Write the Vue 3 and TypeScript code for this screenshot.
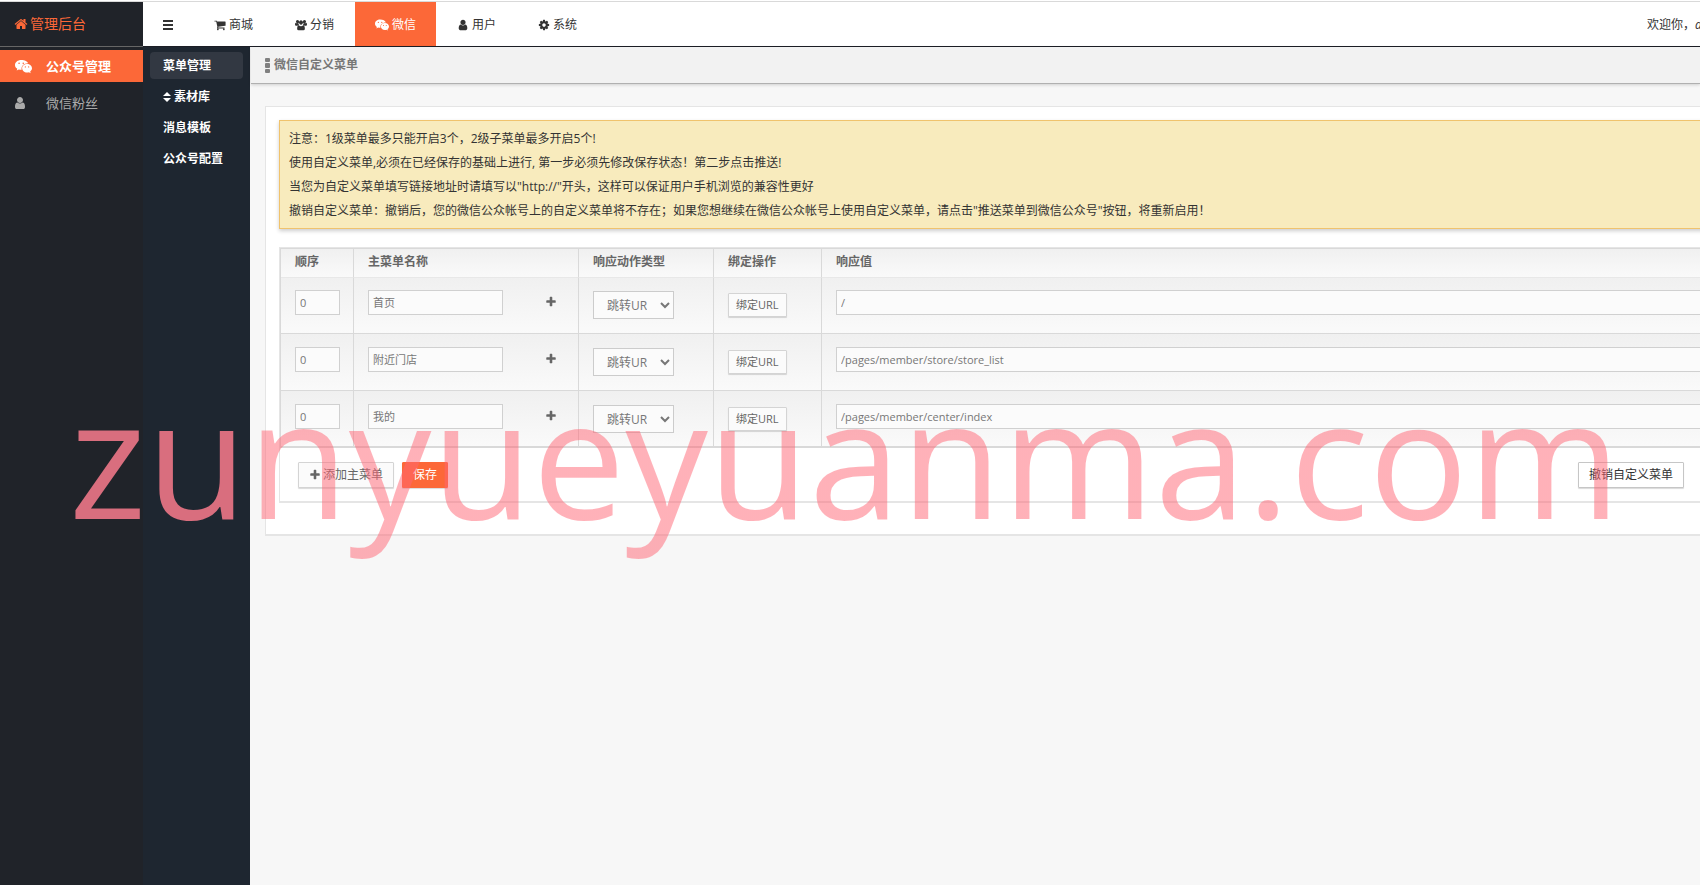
<script setup lang="ts">
import { ref } from 'vue'

interface NavItem {
  label: string
  icon: string
  active?: boolean
}

interface MenuRow {
  order: number
  name: string
  url: string
}

const box = '0 0 1792 1792'

const icons: Record<string, string> = {
  home: 'M1472 992v480q0 26-19 45t-45 19h-384v-384h-256v384h-384q-26 0-45-19t-19-45v-480q0-1 .5-3t.5-3l575-474 575 474q1 2 1 6zm223-69l-62 74q-8 9-21 11h-3q-13 0-21-7l-692-577-692 577q-12 8-24 7-13-2-21-11l-62-74q-8-10-7-23.5t11-21.5l719-599q32-26 76-26t76 26l244 204v-195q0-14 9-23t23-9h192q14 0 23 9t9 23v408l219 182q10 8 11 21.5t-7 23.5z',
  cart: 'M704 1536q0 52-38 90t-90 38-90-38-38-90 38-90 90-38 90 38 38 90zm896 0q0 52-38 90t-90 38-90-38-38-90 38-90 90-38 90 38 38 90zm128-1088v512q0 24-16.5 42.5t-40.5 21.5l-1044 122q13 60 13 70 0 16-24 64h920q26 0 45 19t19 45-19 45-45 19h-1024q-26 0-45-19t-19-45q0-11 8-31.5t16-36 21.5-40 15.5-29.5l-177-823h-204q-26 0-45-19t-19-45 19-45 45-19h256q16 0 28.5 6.5t19.5 15.5 13 24.5 8 26 5.5 29.5 4.5 26h1201q26 0 45 19t19 45z',
  users: 'M660 700a300 300 0 1 1 472 0a300 300 0 0 1-472 0zM140 380a240 240 0 1 1 480 0a240 240 0 0 1-480 0zM1172 380a240 240 0 1 1 480 0a240 240 0 0 1-480 0zM0 860q0-280 120-300q110 80 240 80q90 0 150-30q0 170 90 270q-150 10-240 110h-200q-160 0-160-130zM1792 860q0-280-120-300q-110 80-240 80q-90 0-150-30q0 170-90 270q150 10 240 110h200q160 0 160-130zM320 1440q0-480 250-500q150 130 326 130t326-130q250 20 250 500q0 224-220 224h-712q-220 0-220-224z',
  wechat: 'M660 200C290 200 0 430 0 730c0 170 90 310 240 410l-60 190 225-115c85 20 165 32 255 32h45c-100-390 270-700 680-680C1330 350 1020 200 660 200zM430 470a85 85 0 1 1 0 170a85 85 0 0 1 0-170zM870 470a85 85 0 1 1 0 170a85 85 0 0 1 0-170zM1270 640c-300 0-520 205-520 445s220 445 520 445c70 0 140-15 200-35l180 100-50-165c110-85 192-200 192-345c0-240-222-445-522-445zM1090 880a65 65 0 1 1 0 130a65 65 0 0 1 0-130zM1440 880a65 65 0 1 1 0 130a65 65 0 0 1 0-130z',
  user: 'M1536 1399q0 109-62.5 187t-150.5 78h-854q-88 0-150.5-78t-62.5-187q0-85 8.5-160.5t31.5-152 58.5-131 94-89 134.5-34.5q131 128 313 128t313-128q76 0 134.5 34.5t94 89 58.5 131 31.5 152 8.5 160.5zm-256-887q0 159-112.5 271.5t-271.5 112.5-271.5-112.5-112.5-271.5 112.5-271.5 271.5-112.5 271.5 112.5 112.5 271.5z',
  cog: 'M1152 896q0-106-75-181t-181-75-181 75-75 181 75 181 181 75 181-75 75-181zm512-109v222q0 12-8 23t-20 13l-185 28q-19 54-39 91 35 50 107 138 10 12 10 25t-9 23q-27 37-99 108t-94 71q-12 0-26-9l-138-108q-44 23-91 38-16 136-29 186-7 28-36 28h-222q-14 0-24.5-8.5t-11.5-21.5l-28-184q-49-16-90-37l-141 107q-10 9-25 9-14 0-25-11-126-114-165-168-7-10-7-23 0-12 8-23 15-21 51-66.5t54-70.5q-27-50-41-99l-183-27q-13-2-21-12.5t-8-23.5v-222q0-12 8-23t19-13l186-28q14-46 39-92-40-57-107-138-10-12-10-24 0-10 9-23 26-36 98.5-107.5t94.5-71.5q13 0 26 10l138 107q44-23 91-38 16-136 29-186 7-28 36-28h222q14 0 24.5 8.5t11.5 21.5l28 184q49 16 90 37l142-107q9-9 24-9 13 0 25 10 129 119 165 170 7 8 7 22 0 12-8 23-15 21-51 66.5t-54 70.5q26 50 41 98l183 28q13 2 21 12.5t8 23.5z',
  plus: 'M1600 736v192q0 40-28 68t-68 28h-416v416q0 40-28 68t-68 28h-192q-40 0-68-28t-28-68v-416h-416q-40 0-68-28t-28-68v-192q0-40 28-68t68-28h416v-416q0-40 28-68t68-28h192q40 0 68 28t28 68v416h416q40 0 68 28t28 68z',
}

const nav: NavItem[] = [
  { label: '商城', icon: 'cart' },
  { label: '分销', icon: 'users' },
  { label: '微信', icon: 'wechat', active: true },
  { label: '用户', icon: 'user' },
  { label: '系统', icon: 'cog' },
]

const sideItems: NavItem[] = [
  { label: '公众号管理', icon: 'wechat', active: true },
  { label: '微信粉丝', icon: 'user' },
]

const subItems = [
  { label: '菜单管理', active: true },
  { label: '素材库', sortable: true },
  { label: '消息模板' },
  { label: '公众号配置' },
]

const notices = [
  '注意：1级菜单最多只能开启3个，2级子菜单最多开启5个!',
  '使用自定义菜单,必须在已经保存的基础上进行, 第一步必须先修改保存状态！第二步点击推送!',
  '当您为自定义菜单填写链接地址时请填写以"http://"开头，这样可以保证用户手机浏览的兼容性更好',
  '撤销自定义菜单：撤销后，您的微信公众帐号上的自定义菜单将不存在；如果您想继续在微信公众帐号上使用自定义菜单，请点击"推送菜单到微信公众号"按钮，将重新启用！',
]

const rows = ref<MenuRow[]>([
  { order: 0, name: '首页', url: '/' },
  { order: 0, name: '附近门店', url: '/pages/member/store/store_list' },
  { order: 0, name: '我的', url: '/pages/member/center/index' },
])
</script>

<template>
  <div class="app">
    <header class="topbar">
      <a class="brand" href="#">
        <svg class="icon i14" :viewBox="box"><path :d="icons.home" /></svg>
        <span>管理后台</span>
      </a>
      <button class="toggle" type="button" aria-label="菜单">
        <svg class="bars" viewBox="0 0 10 10"><path d="M0 0h10v2H0zM0 4h10v2H0zM0 8h10v2H0z" /></svg>
      </button>
      <nav class="nav">
        <a v-for="item in nav" :key="item.label" href="#" class="nav-item" :class="{ active: item.active }">
          <svg class="icon" :class="item.icon === 'wechat' ? 'i14' : 'i12'" :viewBox="box">
            <path fill-rule="evenodd" :d="icons[item.icon]" />
          </svg>
          <span>{{ item.label }}</span>
        </a>
      </nav>
      <div class="welcome">欢迎你，<em>a</em></div>
    </header>

    <div class="body">
      <nav class="side">
        <a v-for="item in sideItems" :key="item.label" href="#" class="side-item" :class="{ active: item.active }">
          <span class="side-icon" :class="{ narrow: item.icon === 'user' }">
            <svg class="icon" :viewBox="box"><path fill-rule="evenodd" :d="icons[item.icon]" /></svg>
          </span>
          <span>{{ item.label }}</span>
        </a>
      </nav>

      <nav class="sub">
        <a v-for="item in subItems" :key="item.label" href="#" class="sub-item" :class="{ active: item.active }">
          <svg v-if="item.sortable" class="sort" viewBox="0 0 8 10"><path d="M4 0l4 4H0zM0 6h8l-4 4z" /></svg>
          <span>{{ item.label }}</span>
        </a>
      </nav>

      <main class="main">
        <div class="crumb">
          <svg class="dots" viewBox="0 0 5 15">
            <rect width="5" height="4" rx="1" /><rect y="5" width="5" height="5" rx="1" /><rect y="11" width="5" height="4" rx="1" />
          </svg>
          <h1>微信自定义菜单</h1>
        </div>

        <section class="panel">
          <div class="alert">
            <p v-for="line in notices" :key="line">{{ line }}</p>
          </div>

          <form class="editor" @submit.prevent>
            <table class="grid">
              <colgroup>
                <col class="c-order" /><col class="c-name" /><col class="c-type" /><col class="c-bind" /><col />
              </colgroup>
              <thead>
                <tr>
                  <th>顺序</th>
                  <th>主菜单名称</th>
                  <th>响应动作类型</th>
                  <th>绑定操作</th>
                  <th>响应值</th>
                </tr>
              </thead>
              <tbody>
                <tr v-for="(row, i) in rows" :key="i">
                  <td><input v-model="row.order" class="text order" type="text" aria-label="顺序" /></td>
                  <td>
                    <div class="name-cell">
                      <input v-model="row.name" class="text name" type="text" aria-label="主菜单名称" />
                      <button class="plus" type="button" aria-label="添加子菜单">
                        <svg class="icon i12" :viewBox="box"><path :d="icons.plus" /></svg>
                      </button>
                    </div>
                  </td>
                  <td>
                    <select class="type" aria-label="响应动作类型">
                      <option>跳转URL</option>
                    </select>
                  </td>
                  <td><button class="btn bind" type="button">绑定URL</button></td>
                  <td><input v-model="row.url" class="text url" type="text" aria-label="响应值" /></td>
                </tr>
              </tbody>
            </table>
            <div class="actions">
              <button class="btn add" type="button">
                <svg class="icon i12" :viewBox="box"><path :d="icons.plus" /></svg>
                <span>添加主菜单</span>
              </button>
              <button class="btn save" type="submit">保存</button>
              <button class="btn revoke" type="button">撤销自定义菜单</button>
            </div>
          </form>
        </section>
      </main>
    </div>

    <div class="watermark">zunyueyuanma.com</div>
  </div>
</template>

<style>
body {
  margin: 0;
  overflow: hidden;
}
</style>

<style scoped>
* {
  box-sizing: border-box;
}

.app {
  position: relative;
  display: flex;
  flex-direction: column;
  min-height: 100vh;
  overflow: hidden;
  background: #f7f7f7;
  color: #333;
  font: 12px/24px "Open Sans", "Noto Sans CJK SC", sans-serif;
}

a {
  color: inherit;
  text-decoration: none;
}

button,
input,
select {
  font-family: inherit;
}

.icon {
  flex: none;
  fill: currentColor;
}

.i12 {
  width: 12px;
  height: 12px;
}

.i14 {
  width: 14px;
  height: 14px;
}

.topbar {
  display: flex;
  height: 47px;
  padding-top: 1px;
  border-bottom: 1px solid #1c1e26;
  background: linear-gradient(#d9d9d9, #d9d9d9) 0 1px / 100% 1px no-repeat #fff;
}

.brand {
  display: flex;
  flex: none;
  align-items: center;
  gap: 2px;
  width: 143px;
  height: 45px;
  margin-top: 1px;
  padding-left: 14px;
  border-bottom: 1px solid #666;
  background: #202329;
  color: #fc6838;
  font-size: 14px;
}

.toggle {
  display: flex;
  flex: none;
  align-items: center;
  justify-content: center;
  width: 50px;
  padding: 2px 0 0;
  border: 0;
  background: transparent;
}

.bars {
  width: 10px;
  height: 10px;
  fill: #333;
}

.nav {
  display: flex;
  flex: 1;
  padding-top: 1px;
}

.nav-item {
  display: flex;
  align-items: center;
  justify-content: center;
  gap: 3px;
  width: 81px;
  padding-top: 2px;
}

.nav-item.active {
  background: #fc6838;
  color: #fff;
}

.welcome {
  flex: none;
  align-self: center;
  width: 53px;
  padding-top: 2px;
  overflow: hidden;
  white-space: nowrap;
}

.body {
  display: flex;
  flex: 1;
}

.side {
  flex: none;
  width: 143px;
  padding-top: 3px;
  background: #202329;
}

.side-item {
  display: flex;
  align-items: center;
  height: 32px;
  margin-bottom: 5px;
  padding-left: 15px;
  color: #aaa;
  font-size: 13px;
}

.side-item.active {
  background: #fc6838;
  color: #fff;
  font-weight: bold;
}

.side-icon {
  display: flex;
  width: 31px;
}

.side-icon .icon {
  width: 17px;
  height: 17px;
}

.side-icon.narrow .icon {
  width: 14px;
  height: 14px;
  margin-left: -2px;
}

.sub {
  flex: none;
  display: flex;
  flex-direction: column;
  gap: 4px;
  width: 107px;
  padding: 5px 7px;
  background: #1e2630;
}

.sub-item {
  display: flex;
  align-items: center;
  gap: 3px;
  height: 27px;
  padding-left: 13px;
  border-radius: 4px;
  color: #fff;
  font-weight: bold;
}

.sub-item.active {
  background: #323842;
}

.sort {
  width: 8px;
  height: 10px;
  fill: currentColor;
}

.main {
  flex: 1;
  min-width: 0;
}

.crumb {
  display: flex;
  align-items: center;
  gap: 4px;
  height: 37px;
  margin-left: 1px;
  padding-left: 14px;
  border-bottom: 1px solid #b0b0b0;
  background: #f2f2f2;
  box-shadow: 0 1px 3px rgba(0, 0, 0, 0.16);
}

.dots {
  width: 5px;
  height: 15px;
  fill: #808080;
}

h1 {
  margin: 0;
  color: #777;
  font-size: 12px;
  font-weight: bold;
}

.panel {
  margin: 22px -40px 0 15px;
  padding: 13px 13px 31px;
  border: 1px solid #e5e5e5;
  border-bottom-width: 2px;
  background: #fff;
}

.alert {
  padding: 6px 9px 5px;
  border: 1px solid #f0c36d;
  background: #f8ebbd;
  box-shadow: 0 2px 4px rgba(0, 0, 0, 0.2);
}

.alert p {
  margin: 0;
  white-space: nowrap;
}

.editor {
  margin-top: 18px;
  border: 1px solid #e5e5e5;
  border-bottom-width: 2px;
}

.grid {
  width: 100%;
  border: solid #d9d9d9;
  border-width: 1px 0 1px 1px;
  border-spacing: 0;
  table-layout: fixed;
}

.c-order {
  width: 73px;
}

.c-name {
  width: 225px;
}

.c-type {
  width: 135px;
}

.c-bind {
  width: 108px;
}

.grid tr {
  background: linear-gradient(#f0f0f0, #fafafa);
}

.grid th,
.grid td {
  border-right: 1px solid #d9d9d9;
  border-bottom: 1px solid #d9d9d9;
  text-align: left;
  vertical-align: top;
}

.grid th {
  height: 29px;
  padding: 1px 14px 0;
  border-bottom-color: #e8e8e8;
  color: #666;
}

.grid td {
  height: 57px;
  padding: 13px 14px 0;
}

.grid tbody tr:first-child td {
  height: 56px;
  padding-top: 12px;
}

.grid tbody tr:last-child td {
  height: 56px;
}

.text {
  display: block;
  height: 25px;
  padding: 0 4px 1px;
  border: 1px solid #d0d0d0;
  border-radius: 0;
  background: #fbfbfb;
  color: #777;
  font-size: 11px;
}

.order {
  width: 45px;
}

.name {
  width: 135px;
}

.url {
  width: 100%;
}

.name-cell {
  display: flex;
  align-items: center;
  justify-content: space-between;
  padding-right: 7px;
}

.plus {
  display: flex;
  padding: 0 0 2px;
  border: 0;
  background: transparent;
  color: #666;
}

.type {
  display: block;
  width: 81px;
  height: 28px;
  margin-top: 1px;
  padding: 0 10px 0 9px;
  border: 1px solid #ccc;
  border-radius: 0;
  background: #fbfbfb;
  color: #777;
  font-size: 12px;
}

.btn {
  display: flex;
  align-items: center;
  justify-content: center;
  gap: 2px;
  height: 26px;
  padding: 0 10px 1px;
  border: 1px solid #d4d4d4;
  border-radius: 1px;
  background: #fbfbfb;
  box-shadow: 0 1px 1px rgba(0, 0, 0, 0.15);
  color: #666;
  font-size: 12px;
  line-height: 16px;
  white-space: nowrap;
}

.bind {
  height: 24px;
  margin-top: 3px;
  padding: 0 7px;
  font-size: 11px;
}

.actions {
  display: flex;
  gap: 8px;
  padding: 14px 41px 13px 18px;
}

.save {
  border-color: #fc6838;
  background: #fc6838;
  color: #fff;
}

.revoke {
  margin-left: auto;
  border-color: #c6c6c6;
  background: #fff;
  color: #333;
}

.watermark {
  position: absolute;
  top: 345px;
  left: 0;
  width: 100%;
  padding-left: 69px;
  background: linear-gradient(90deg, #d96e7e 250px, rgba(255, 100, 115, 0.5) 250px);
  background-clip: text;
  color: transparent;
  font-size: 165px;
  line-height: 220px;
  white-space: nowrap;
  pointer-events: none;
}
</style>
